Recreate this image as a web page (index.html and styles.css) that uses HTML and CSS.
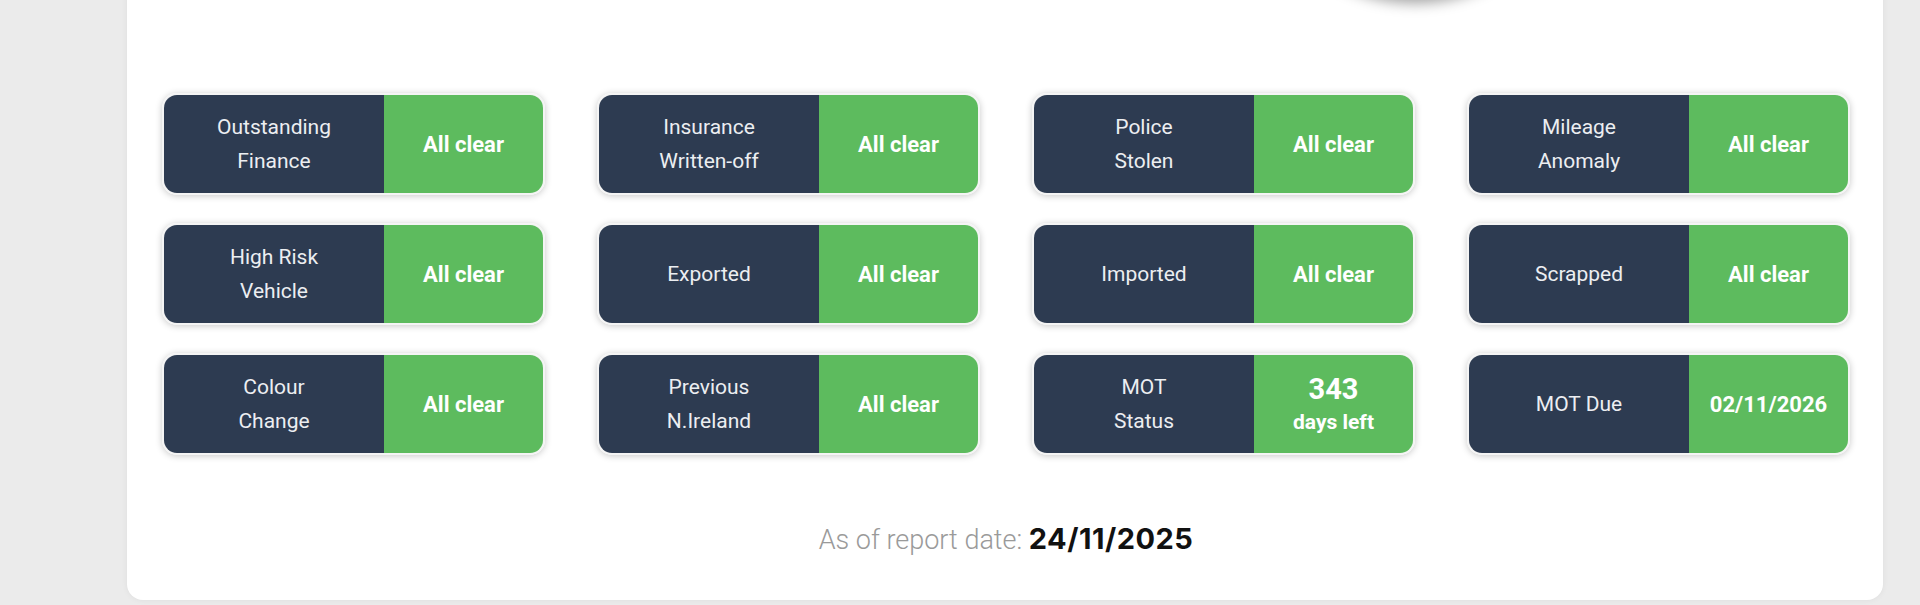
FILE: index.html
```html
<!DOCTYPE html>
<html lang="en">
<head>
<meta charset="utf-8">
<title>Vehicle check</title>
<link rel="stylesheet" href="styles.css">
</head>
<body>
<main class="panel">
  <div class="gauge-wrap"><div class="gauge"></div></div>
  <section class="checks">
    <div class="check"><div class="label">Outstanding<br>Finance</div><div class="result">All clear</div></div>
    <div class="check"><div class="label">Insurance<br>Written-off</div><div class="result">All clear</div></div>
    <div class="check"><div class="label">Police<br>Stolen</div><div class="result">All clear</div></div>
    <div class="check"><div class="label">Mileage<br>Anomaly</div><div class="result">All clear</div></div>
    <div class="check"><div class="label">High Risk<br>Vehicle</div><div class="result">All clear</div></div>
    <div class="check"><div class="label">Exported</div><div class="result">All clear</div></div>
    <div class="check"><div class="label">Imported</div><div class="result">All clear</div></div>
    <div class="check"><div class="label">Scrapped</div><div class="result">All clear</div></div>
    <div class="check"><div class="label">Colour<br>Change</div><div class="result">All clear</div></div>
    <div class="check"><div class="label">Previous<br>N.Ireland</div><div class="result">All clear</div></div>
    <div class="check"><div class="label">MOT<br>Status</div><div class="result days"><span class="big">343</span><span class="small">days left</span></div></div>
    <div class="check"><div class="label">MOT Due</div><div class="result">02/11/2026</div></div>
  </section>
  <p class="report-date">As of report date: <strong>24/11/2025</strong></p>
</main>
</body>
</html>
```

FILE: styles.css
```css
* { box-sizing: border-box; }
html, body { margin: 0; padding: 0; }
body {
  background: #ebebeb;
  height: 605px;
  overflow: hidden;
  padding: 0 37px 0 127px;
  font-family: Roboto, "Liberation Sans", sans-serif;
}
.panel {
  background: #ffffff;
  margin-top: -40px;
  height: 640px;
  border-radius: 16px;
  box-shadow: 0 0 6px rgba(0,0,0,0.06);
  padding: 0 33px 0 35px;
  display: flex;
  flex-direction: column;
}
.gauge-wrap {
  height: 0;
  display: flex;
  justify-content: flex-end;
  padding-right: 270px;
}
.gauge {
  width: 330px;
  height: 330px;
  margin-top: -292px;
  border-radius: 50%;
  background: #ffffff;
  box-shadow: 0 5px 14px rgba(0,0,0,0.38);
  flex: none;
}
.checks {
  margin-top: 133px;
  display: grid;
  grid-template-columns: repeat(4, 383px);
  column-gap: 52px;
  row-gap: 28px;
  position: relative;
  z-index: 1;
}
.check {
  height: 102px;
  display: flex;
  border: 2px solid #f4f4f4;
  border-radius: 15px;
  overflow: hidden;
  box-shadow: 0 1px 7px rgba(0,0,0,0.22);
}
.label {
  width: 220px;
  flex: none;
  background: #2d3b51;
  color: #eceef1;
  font-size: 21px;
  line-height: 34px;
  display: flex;
  align-items: center;
  justify-content: center;
  text-align: center;
}
.result {
  flex: 1;
  background: #5dbb5e;
  color: #ffffff;
  font-weight: 700;
  font-size: 22px;
  display: flex;
  align-items: center;
  justify-content: center;
  text-align: center;
}
.result.days {
  flex-direction: column;
}
.big { font-size: 29px; line-height: 36px; }
.small { font-size: 21px; line-height: 30px; }
.report-date {
  margin: 66px 0 0;
  text-align: center;
  color: #9a9a9a;
  font-size: 27px;
  font-weight: 300;
  line-height: 36px;
}
.report-date strong {
  color: #111111;
  font-family: Inter, "Liberation Sans", sans-serif;
  font-weight: 700;
  font-size: 29px;
  letter-spacing: 0.5px;
}
```
